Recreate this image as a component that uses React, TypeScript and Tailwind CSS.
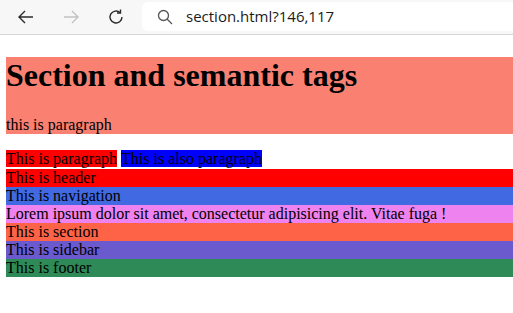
import React from "react";

export default function App() {
  return (
    <div className="w-[513px] h-[313px] bg-white overflow-hidden" style={{ fontFamily: '"Liberation Serif", serif' }}>
      <div className="h-[35px] bg-[#f7f7f7] border-b border-[#d5d5d5] flex items-center relative">
        <div className="flex items-center pl-[17px] gap-[27px]">
          <svg width="18" height="18" viewBox="0 0 18 18" fill="none" stroke="#2b2b2b" strokeWidth="1.4">
            <path d="M16 9H2M8 3L2 9l6 6" />
          </svg>
          <svg width="18" height="18" viewBox="0 0 18 18" fill="none" stroke="#c2c2c2" strokeWidth="1.4">
            <path d="M2 9h14M10 3l6 6-6 6" />
          </svg>
          <svg width="18" height="18" viewBox="0 0 18 18" fill="none" stroke="#2b2b2b" strokeWidth="1.4">
            <path d="M15 9a6 6 0 1 1-2-4.5" />
            <path d="M13.5 1.5v3.5H10" />
          </svg>
        </div>
        <div className="absolute left-[142px] top-[2px] right-[-20px] h-[29px] bg-white rounded-[6px] flex items-center">
          <svg className="ml-[15px]" width="16" height="16" viewBox="0 0 16 16" fill="none" stroke="#555" strokeWidth="1.3">
            <circle cx="6.5" cy="6.5" r="5" />
            <path d="M10 10l5 5" />
          </svg>
          <span className="ml-[13px] text-[15px] text-[#1b1b1b]" style={{ fontFamily: '"Open Sans", "Noto Sans", sans-serif' }}>
            section.html?146,117
          </span>
        </div>
      </div>
      <div className="pl-[6px] text-black text-[16px]">
        <div className="mt-[22px] bg-[#fa8072]">
          <h1 className="text-[32px] font-bold leading-[37px] mb-[22px]">Section and semantic tags</h1>
          <p className="leading-[18px]">this is paragraph</p>
        </div>
        <div className="mt-[16px] h-[19px] flex items-start">
          <span className="bg-[#ff0000] h-[17px] leading-[17px]">This is paragraph</span>
          <span className="w-[4px]" />
          <span className="bg-[#0000ff] h-[17px] leading-[17px]">This is also paragraph</span>
        </div>
        <div className="leading-[18px]">
          <div className="bg-[#ff0000]">This is header</div>
          <div className="bg-[#4169e1]">This is navigation</div>
          <div className="bg-[#ee82ee]">Lorem ipsum dolor sit amet, consectetur adipisicing elit. Vitae fuga !</div>
          <div className="bg-[#ff6347]">This is section</div>
          <div className="bg-[#6a5acd]">This is sidebar</div>
          <div className="bg-[#2e8b57]">This is footer</div>
        </div>
      </div>
    </div>
  );
}
